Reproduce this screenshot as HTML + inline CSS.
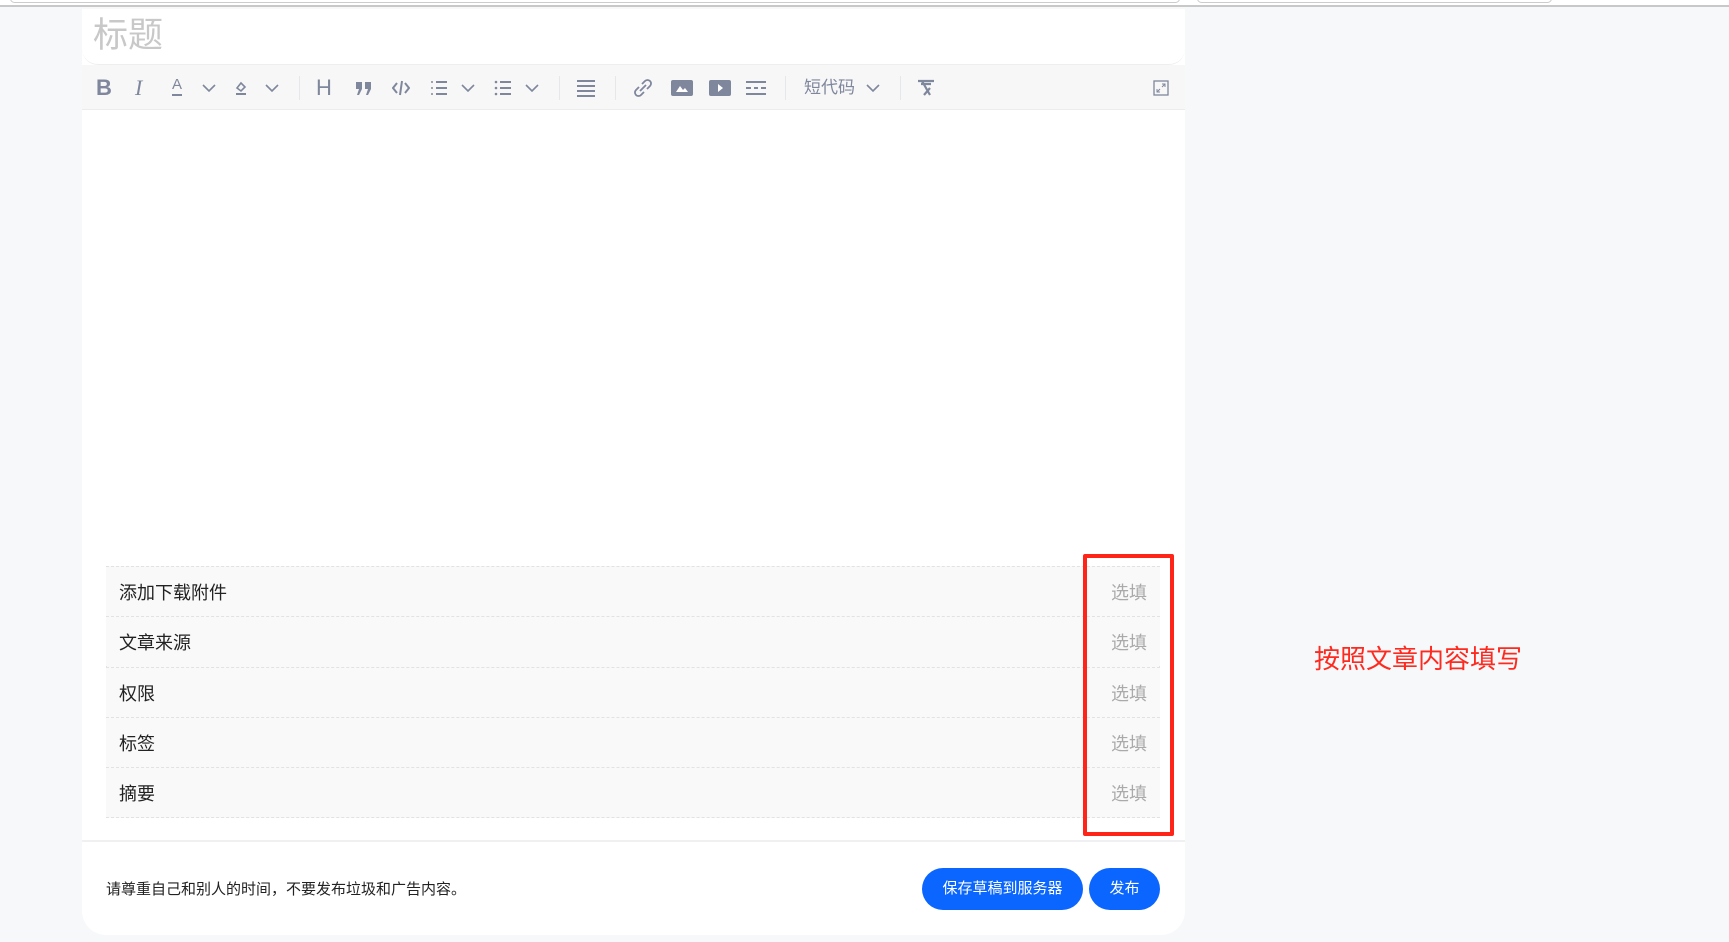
<!DOCTYPE html>
<html><head><meta charset="utf-8"><style>
*{margin:0;padding:0;box-sizing:border-box}
body{width:1729px;height:942px;background:#f7f8fa;position:relative;overflow:hidden;font-family:"Liberation Sans","Noto Sans CJK SC",sans-serif}
.a{position:absolute}
.card{left:82px;top:9px;width:1103px;height:926px;background:#fff;border-radius:0 0 24px 24px}
.ic{position:absolute;top:78px;width:18px;height:18px}
.ic svg{width:18px;height:18px;display:block}
.dv{position:absolute;top:76px;width:1px;height:24px;background:#e6e7ea}
.row{position:absolute;left:106px;width:1054px;height:50px;border-top:1px dashed #e2e2e2;background:#f9f9f9;font-size:18px;color:#222;line-height:52px;padding-left:13px}
.row span{position:absolute;left:1005px;color:#aaa}
.btn{position:absolute;top:868px;height:42px;background:#0a66ff;color:#fff;border-radius:21px;font-size:15px;line-height:42px;text-align:center}
</style></head><body>
<div class="a" style="left:0;top:0;width:1729px;height:7px;border-bottom:2px solid #c8c8c8;background:#fff"></div>
<div class="a" style="left:10px;top:-6px;width:1170px;height:9px;border:1px solid #ccc;border-radius:6px"></div>
<div class="a" style="left:1197px;top:-6px;width:355px;height:9px;border:1px solid #ccc;border-radius:6px"></div>
<div class="a card"></div>
<div class="a" style="left:82px;top:9px;width:1103px;height:56px;border-bottom:1px solid #eee;border-radius:0 0 16px 16px"></div>
<div class="a" style="left:93px;top:14px;font-size:35px;color:#c8c8c8;line-height:44px">标题</div>
<div class="a" style="left:82px;top:65px;width:1103px;height:45px;background:#f7f7f8;border-bottom:1px solid #ececec"></div>
<div style="color:#7f879c">
<div class="a" style="left:96px;top:74px;font-size:22px;font-weight:bold;line-height:28px">B</div>
<div class="a" style="left:135px;top:74px;font-size:22px;font-style:italic;line-height:28px;font-family:'Liberation Serif',serif">I</div>
<div class="a" style="left:172px;top:76px;font-size:15px;line-height:18px;border-bottom:2px solid #7f879c">A</div>
<div class="ic" style="left:232px;top:79px"><svg viewBox="0 0 18 18"><path d="M5 9l4-5 4 4-4 4z" fill="none" stroke="#7f879c" stroke-width="1.6"/><path d="M4 15h10" stroke="#7f879c" stroke-width="2"/></svg></div>
<div class="a" style="left:316px;top:74px;font-size:22px;line-height:28px">H</div>
<div class="ic" style="left:355px;top:80px"><svg viewBox="0 0 18 18"><path d="M1 2h6v7l-3 6H2l2-6H1zM10 2h6v7l-3 6h-2l2-6h-3z" fill="#7f879c"/></svg></div>
<div class="ic" style="left:392px;top:79px"><svg viewBox="0 0 18 18"><path d="M5 4L1 9l4 5M13 4l4 5-4 5M10 2L8 16" fill="none" stroke="#7f879c" stroke-width="2"/></svg></div>
<div class="ic" style="left:430px;top:79px"><svg viewBox="0 0 18 18"><path d="M6 3h11M6 9h11M6 15h11" stroke="#7f879c" stroke-width="2"/><path d="M1 3h2M1 9h2M1 15h2" stroke="#7f879c" stroke-width="1.5"/></svg></div>
<div class="ic" style="left:494px;top:79px"><svg viewBox="0 0 18 18"><path d="M6 3h11M6 9h11M6 15h11" stroke="#7f879c" stroke-width="2"/><circle cx="2" cy="3" r="1.3" fill="#7f879c"/><circle cx="2" cy="9" r="1.3" fill="#7f879c"/><circle cx="2" cy="15" r="1.3" fill="#7f879c"/></svg></div>
<div class="ic" style="left:577px;top:79px"><svg viewBox="0 0 18 18"><path d="M0 2h19M0 7h19M0 12h19M0 17h19" stroke="#7f879c" stroke-width="2"/></svg></div>
<div class="ic" style="left:634px;top:79px"><svg viewBox="0 0 18 18"><path d="M8 5l3-3a3.5 3.5 0 015 5l-3 3M10 13l-3 3a3.5 3.5 0 01-5-5l3-3M6 12l6-6" fill="none" stroke="#7f879c" stroke-width="1.8"/></svg></div>
<div class="ic" style="left:671px;top:79px;width:22px"><svg viewBox="0 0 22 18" style="width:22px"><rect x="0" y="1" width="22" height="16" rx="2" fill="#7f879c"/><path d="M5 13l4-6 3 4 2-2 3 4z" fill="#fff"/></svg></div>
<div class="ic" style="left:709px;top:79px;width:22px"><svg viewBox="0 0 22 18" style="width:22px"><rect x="0" y="1" width="22" height="16" rx="2" fill="#7f879c"/><path d="M9 5l5 4-5 4z" fill="#fff"/></svg></div>
<div class="ic" style="left:746px;top:79px;width:20px"><svg viewBox="0 0 20 18" style="width:20px"><path d="M0 3h20M0 15h20M0 9h5M8 9h4M15 9h5" stroke="#7f879c" stroke-width="2"/></svg></div>
<div class="a" style="left:804px;top:77px;font-size:17px;line-height:22px">短代码</div>
<div class="ic" style="left:917px;top:79px"><svg viewBox="0 0 18 18"><path d="M1 2h16M4 5h10M5 2l8 14M13 9l-6 7" fill="none" stroke="#7f879c" stroke-width="2.2"/></svg></div>
<div class="ic" style="left:1153px;top:79px;width:16px"><svg viewBox="0 0 16 18" style="width:16px"><rect x="1" y="2" width="14" height="14" fill="none" stroke="#7f879c" stroke-width="1.3"/><path d="M9 5h3v3M7 13H4v-3M12 5L9 8M4 13l3-3" fill="none" stroke="#7f879c" stroke-width="1"/></svg></div>
</div>
<div class="ic" style="left:200px;top:79px"><svg viewBox="0 0 18 18"><path d="M3 6l6 6 6-6" fill="none" stroke="#7f879c" stroke-width="1.6"/></svg></div>
<div class="ic" style="left:263px;top:79px"><svg viewBox="0 0 18 18"><path d="M3 6l6 6 6-6" fill="none" stroke="#7f879c" stroke-width="1.6"/></svg></div>
<div class="ic" style="left:459px;top:79px"><svg viewBox="0 0 18 18"><path d="M3 6l6 6 6-6" fill="none" stroke="#7f879c" stroke-width="1.6"/></svg></div>
<div class="ic" style="left:523px;top:79px"><svg viewBox="0 0 18 18"><path d="M3 6l6 6 6-6" fill="none" stroke="#7f879c" stroke-width="1.6"/></svg></div>
<div class="ic" style="left:864px;top:79px"><svg viewBox="0 0 18 18"><path d="M3 6l6 6 6-6" fill="none" stroke="#7f879c" stroke-width="1.6"/></svg></div>
<div class="dv" style="left:299px"></div><div class="dv" style="left:559px"></div><div class="dv" style="left:615px"></div><div class="dv" style="left:785px"></div><div class="dv" style="left:900px"></div>

<div class="a" style="left:106px;top:566px;width:1054px;height:252px;border:1px dashed #e2e2e2;background:#f9f9f9"></div>
<div class="row" style="top:566px;border-top:1px dashed #e2e2e2">添加下载附件<span>选填</span></div>
<div class="row" style="top:616px">文章来源<span>选填</span></div>
<div class="row" style="top:667px">权限<span>选填</span></div>
<div class="row" style="top:717px">标签<span>选填</span></div>
<div class="row" style="top:767px">摘要<span>选填</span></div>
<div class="a" style="left:1083px;top:554px;width:91px;height:282px;border:4px solid #ff2418;border-radius:2px"></div>
<div class="a" style="left:82px;top:840px;width:1103px;height:2px;background:#f0f0f2"></div>
<div class="a" style="left:106px;top:879px;font-size:15px;color:#222;line-height:22px">请尊重自己和别人的时间，不要发布垃圾和广告内容。</div>
<div class="btn" style="left:922px;width:161px">保存草稿到服务器</div>
<div class="btn" style="left:1089px;width:71px">发布</div>
<div class="a" style="left:1314px;top:642px;font-size:26px;color:#ff2a1f;line-height:34px">按照文章内容填写</div>
</body></html>
